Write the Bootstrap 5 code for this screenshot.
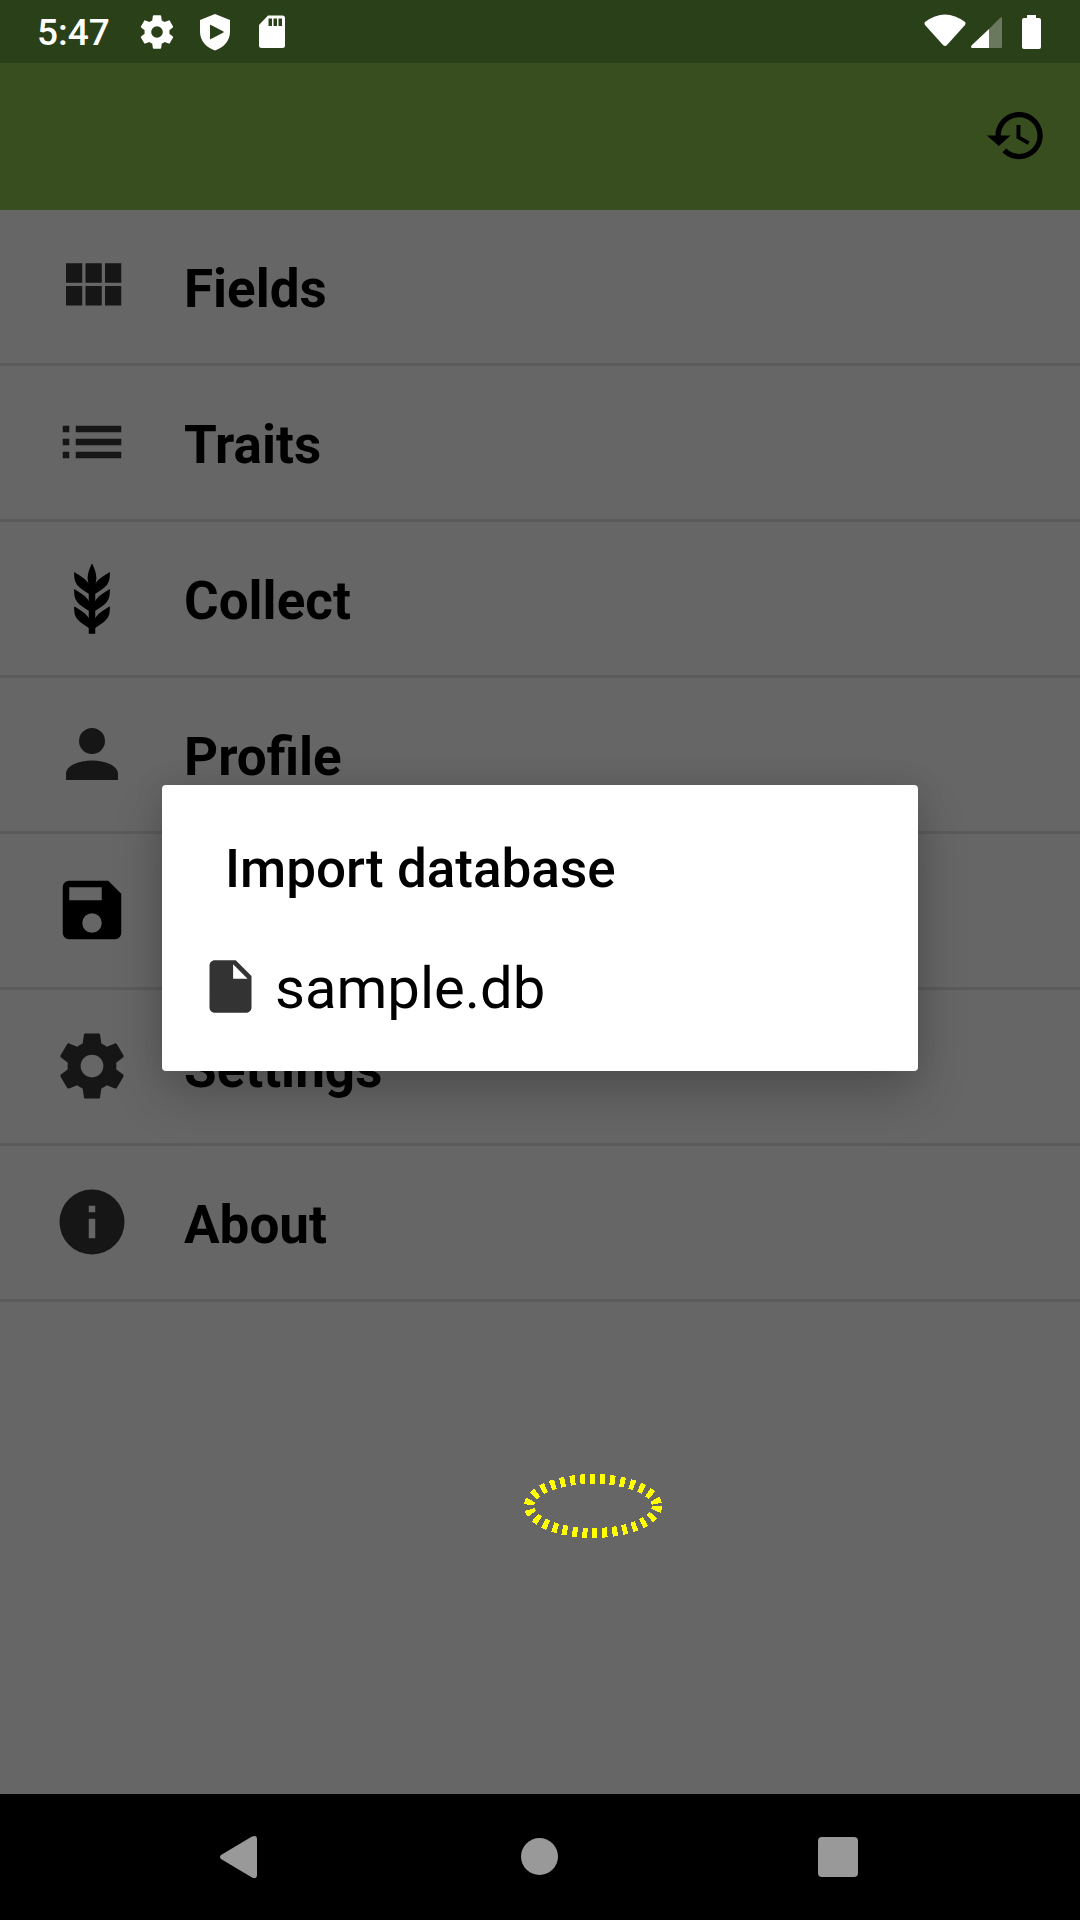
<!DOCTYPE html>
<html lang="en">
<head>
<meta charset="utf-8">
<meta name="viewport" content="width=device-width, initial-scale=1">
<title>Import database</title>
<link href="https://cdn.jsdelivr.net/npm/bootstrap@5.3.0/dist/css/bootstrap.min.css" rel="stylesheet">
<style>
  body { font-family: Roboto, "Noto Sans", sans-serif; background: #666; color: #000; }
  svg { display: block; flex: none; }
  .status-bar { height: 63px; background: #2a4018; color: #fff; padding: 0 34px 0 37px; font-size: 37px; line-height: 40px; font-weight: 500; }
  .status-time { padding-top: 3px; margin-right: 27px; }
  .status-icons { gap: 18px; }
  .app-bar { height: 147px; background: #384e1f; padding: 0 32px 2px 0; }
  .menu-link { height: 156px; padding: 0 0 1px 53px; gap: 53px; border-bottom: 3px solid #5b5b5b; color: #000; font-size: 53px; line-height: 60px; font-weight: 700; }
  .menu-link span { padding-top: 6px; }
  .soft-icon { fill: #161616; }
  .dialog-layer { z-index: 5; padding-bottom: 1px; }
  .dialog-box { width: 70%; min-height: 286px; background: #fff; border-radius: 4px; padding: 52px 37px 50px; box-shadow: 0 24px 52px rgba(0,0,0,.2), 0 0 30px rgba(0,0,0,.1); }
  .dialog-title { margin: 0; padding-left: 26px; font-size: 53px; line-height: 64px; font-weight: 500; }
  .file-choice { margin-top: 50px; gap: 13px; font-size: 58px; line-height: 66px; color: #000; }
  .file-choice span { padding-top: 4px; }
  .tap-mark { left: 522px; top: 1409px; z-index: 4; }
  .nav-keys { height: 126px; background: #000; padding: 0 90px; }
</style>
<script src="https://cdn.jsdelivr.net/npm/bootstrap@5.3.0/dist/js/bootstrap.bundle.min.js"></script>
</head>
<body>
<div class="min-vh-100 d-flex flex-column">
  <div class="status-bar d-flex align-items-center">
    <div class="status-time">5:47</div>
    <div class="status-icons d-flex align-items-center">
      <svg width="40" height="40" viewBox="0 0 24 24" fill="#fff"><path d="M19.43 12.98c.04-.32.07-.64.07-.98s-.03-.66-.07-.98l2.11-1.65c.19-.15.24-.42.12-.64l-2-3.46c-.12-.22-.39-.3-.61-.22l-2.49 1c-.52-.4-1.08-.73-1.69-.98l-.38-2.65C14.46 2.18 14.25 2 14 2h-4c-.25 0-.46.18-.49.42l-.38 2.65c-.61.25-1.17.59-1.69.98l-2.49-1c-.23-.09-.49 0-.61.22l-2 3.46c-.13.22-.07.49.12.64l2.11 1.65c-.04.32-.07.65-.07.98s.03.66.07.98l-2.11 1.65c-.19.15-.24.42-.12.64l2 3.46c.12.22.39.3.61.22l2.49-1c.52.4 1.08.73 1.69.98l.38 2.65c.03.24.24.42.49.42h4c.25 0 .46-.18.49-.42l.38-2.65c.61-.25 1.17-.59 1.69-.98l2.49 1c.23.09.49 0 .61-.22l2-3.46c.12-.22.07-.49-.12-.64l-2.11-1.65zM12 15.5a3.5 3.5 0 1 1 0-7 3.5 3.5 0 0 1 0 7z"/></svg>
      <svg width="40" height="40" viewBox="0 0 40 40" fill="#fff" fill-rule="evenodd"><path d="M20 2 35 8V20C35 29 28 36 20 38.500C12 36 5 29 5 20V8ZM15 13V27Q15 27.500 15.500 27.200L28.500 20.500Q29 20 28.500 19.500L15.500 12.800Q15 12.500 15 13Z"/></svg>
      <svg width="40" height="40" viewBox="0 0 40 40" fill="#fff" fill-rule="evenodd"><path d="M15 3.500H29.500Q32 3.500 32 6V33.500Q32 36 29.500 36H8.500Q6 36 6 33.500V13ZM15.500 6.500V14H19V6.500ZM20.500 6.500V14H24V6.500ZM25.500 6.500V14H29V6.500Z"/></svg>
    </div>
    <svg class="ms-auto" width="122" height="40" viewBox="0 0 122 40" fill="#fff"><path d="M1 10Q21-5 41 10Q42 11 41 13L23 33Q21 35 19 33L1 13Q0 11 1 10Z"/><path opacity=".3" d="M65 17V36H77Q78 36 78 35V7Q78 4 76 6Z"/><path d="M65 17V36H48Q46 35 48 33Z"/><path d="M103 3H112V6H115Q117 6 117 8V35Q117 37 115 37H100Q98 37 98 35V8Q98 6 100 6H103Z"/></svg>
  </div>

  <div class="position-relative flex-grow-1 d-flex flex-column">
    <header class="app-bar d-flex align-items-center justify-content-end">
      <button type="button" class="btn p-0 border-0" aria-label="History">
        <svg width="63" height="63" viewBox="0 0 24 24"><path d="M13 3c-4.970 0-9 4.030-9 9H.700l4.600 4L9.700 12H6c0-3.870 3.130-7 7-7s7 3.130 7 7-3.130 7-7 7c-1.930 0-3.680-.790-4.940-2.060l-1.420 1.420C8.270 19.990 10.510 21 13 21c4.970 0 9-4.030 9-9s-4.030-9-9-9zm-1 5v5l4.280 2.540.720-1.210-3.500-2.080V8H12z"/></svg>
      </button>
    </header>

    <nav aria-label="Main menu">
      <a href="#fields" class="menu-link d-flex align-items-center text-decoration-none">
        <svg class="soft-icon" width="78" height="78" viewBox="0 0 24 24"><path d="M4 11h5V5H4v6zm0 7h5v-6H4v6zm6 0h5v-6h-5v6zm6 0h5v-6h-5v6zm-6-7h5V5h-5v6zm6-6v6h5V5h-5z"/></svg>
        <span>Fields</span></a>
      <a href="#traits" class="menu-link d-flex align-items-center text-decoration-none">
        <svg class="soft-icon" width="78" height="78" viewBox="0 0 24 24"><path d="M3 13h2v-2H3v2zm0 4h2v-2H3v2zm0-8h2V7H3v2zm4 4h14v-2H7v2zm0 4h14v-2H7v2zM7 7v2h14V7H7z"/></svg>
        <span>Traits</span></a>
      <a href="#collect" class="menu-link d-flex align-items-center text-decoration-none">
        <svg width="78" height="78" viewBox="0 0 24 24"><path d="M7.330 18.330C6.500 17.170 6.500 15.830 6.500 14.500C8.170 15.500 9.830 16.500 10.670 17.670L11 18.230V15.950C9.500 15.050 8.080 14.130 7.330 13.080C6.500 11.920 6.500 10.580 6.500 9.250C8.170 10.250 9.830 11.250 10.670 12.420L11 13V10.700C9.500 9.800 8.080 8.880 7.330 7.830C6.500 6.670 6.500 5.330 6.500 4C8.170 5 9.830 6 10.670 7.170C10.770 7.310 10.860 7.460 10.940 7.620C10.770 7 10.660 6.420 10.650 5.820C10.640 4.270 11.330 2.710 12 1.300C12.670 2.710 13.360 4.270 13.350 5.820C13.340 6.420 13.230 7 13.060 7.620C13.140 7.460 13.230 7.310 13.330 7.170C14.170 6 15.830 5 17.500 4C17.500 5.330 17.500 6.670 16.670 7.830C15.920 8.880 14.500 9.800 13 10.700V13L13.330 12.420C14.170 11.250 15.830 10.250 17.500 9.250C17.500 10.580 17.500 11.920 16.670 13.080C15.920 14.130 14.500 15.050 13 15.950V18.230L13.330 17.670C14.170 16.500 15.830 15.500 17.500 14.500C17.500 15.830 17.500 17.170 16.670 18.330C15.920 19.380 14.500 20.300 13 21.200V23H11V21.200C9.500 20.300 8.080 19.380 7.330 18.330Z"/></svg>
        <span>Collect</span></a>
      <a href="#profile" class="menu-link d-flex align-items-center text-decoration-none">
        <svg class="soft-icon" width="78" height="78" viewBox="0 0 24 24"><path d="M12 4a4 4 0 1 1 0 8 4 4 0 0 1 0-8zM12 14c4.420 0 8 1.790 8 4v2H4v-2c0-2.210 3.580-4 8-4z"/></svg>
        <span>Profile</span></a>
      <a href="#export" class="menu-link d-flex align-items-center text-decoration-none">
        <svg width="78" height="78" viewBox="0 0 24 24"><path d="M17 3H5c-1.110 0-2 .9-2 2v14c0 1.100.89 2 2 2h14c1.100 0 2-.9 2-2V7l-4-4zm-5 16a3 3 0 1 1 0-6 3 3 0 0 1 0 6zm3-10H5V5h10v4z"/></svg>
        <span>Export</span></a>
      <a href="#settings" class="menu-link d-flex align-items-center text-decoration-none">
        <svg class="soft-icon" width="78" height="78" viewBox="0 0 24 24"><path d="M19.43 12.98c.04-.32.07-.64.07-.98s-.03-.66-.07-.98l2.11-1.65c.19-.15.24-.42.12-.64l-2-3.46c-.12-.22-.39-.3-.61-.22l-2.49 1c-.52-.4-1.08-.73-1.69-.98l-.38-2.65C14.46 2.18 14.25 2 14 2h-4c-.25 0-.46.18-.49.42l-.38 2.65c-.61.25-1.17.59-1.69.98l-2.49-1c-.23-.09-.49 0-.61.22l-2 3.46c-.13.22-.07.49.12.64l2.11 1.65c-.04.32-.07.65-.07.98s.03.66.07.98l-2.11 1.65c-.19.15-.24.42-.12.64l2 3.46c.12.22.39.3.61.22l2.49-1c.52.4 1.08.73 1.69.98l.38 2.65c.03.24.24.42.49.42h4c.25 0 .46-.18.49-.42l.38-2.65c.61-.25 1.17-.59 1.69-.98l2.49 1c.23.09.49 0 .61-.22l2-3.46c.12-.22.07-.49-.12-.64l-2.11-1.65zM12 15.5a3.5 3.5 0 1 1 0-7 3.5 3.5 0 0 1 0 7z"/></svg>
        <span>Settings</span></a>
      <a href="#about" class="menu-link d-flex align-items-center text-decoration-none">
        <svg class="soft-icon" width="78" height="78" viewBox="0 0 24 24"><path fill-rule="evenodd" d="M12 2a10 10 0 1 1 0 20 10 10 0 0 1 0-20zM11 17h2v-6h-2zM11 9h2V7h-2z"/></svg>
        <span>About</span></a>
    </nav>

    <svg class="tap-mark position-absolute" width="142" height="68" viewBox="0 0 142 68" aria-hidden="true"><ellipse cx="71" cy="34" rx="64" ry="27" fill="none" stroke="#ff0" stroke-width="10" stroke-dasharray="5 5" shape-rendering="crispEdges"/></svg>

    <div class="dialog-layer position-absolute top-0 start-0 w-100 h-100 d-flex align-items-center justify-content-center">
      <div class="dialog-box" role="dialog" aria-labelledby="dialog-title">
        <h1 class="dialog-title" id="dialog-title">Import database</h1>
        <button type="button" class="file-choice btn p-0 border-0 w-100 d-flex align-items-center text-start">
          <svg width="63" height="63" viewBox="0 0 24 24" fill="#333"><path d="M6 2c-1.100 0-1.990.9-1.990 2L4 20c0 1.100.89 2 1.990 2H18c1.100 0 2-.9 2-2V8l-6-6H6zm7 7V3.500L18.500 9H13z"/></svg>
          <span>sample.db</span>
        </button>
      </div>
    </div>
  </div>

  <div class="nav-keys d-flex align-items-stretch">
    <button type="button" class="btn p-0 border-0 flex-fill d-flex align-items-center justify-content-center" aria-label="Back"><svg width="44" height="44" viewBox="0 0 44 44" fill="#999"><path d="M3 20 34 1.500Q39 -.5 39 4V40Q39 44.500 34 42.500L3 24Q1 22 3 20Z"/></svg></button>
    <button type="button" class="btn p-0 border-0 flex-fill d-flex align-items-center justify-content-center" aria-label="Home"><svg width="44" height="44" viewBox="0 0 44 44" fill="#999"><circle cx="21.500" cy="21.500" r="18.500"/></svg></button>
    <button type="button" class="btn p-0 border-0 flex-fill d-flex align-items-center justify-content-center" aria-label="Overview"><svg width="44" height="44" viewBox="0 0 44 44" fill="#999"><rect y="2" width="40" height="40" rx="4"/></svg></button>
  </div>
</div>
</body>
</html>
